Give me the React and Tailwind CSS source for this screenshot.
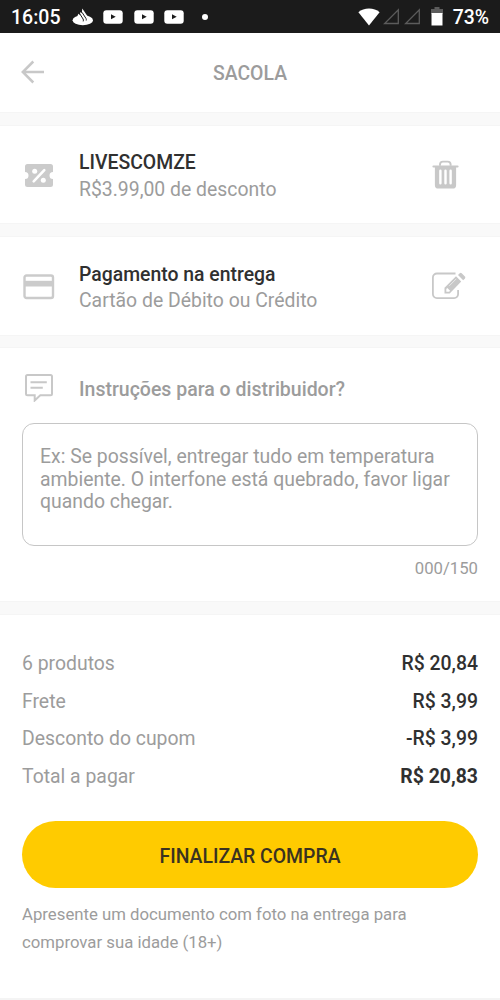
const TOTALS = [
  { label: '6 produtos', value: 'R$ 20,84', weight: 'font-medium' },
  { label: 'Frete', value: 'R$ 3,99', weight: 'font-medium' },
  { label: 'Desconto do cupom', value: '-R$ 3,99', weight: 'font-medium' },
  { label: 'Total a pagar', value: 'R$ 20,83', weight: 'font-bold' },
]

function SantanderIcon() {
  return (
    <svg width="22" height="18" viewBox="0 0 22 18" className="ml-[11px]">
      <ellipse cx="10.800" cy="12.200" rx="10.200" ry="5" fill="#fff" />
      <path d="M5.500 8.500c0-1.200.4-2 1.300-2.800L8 7.200l.3-3.200 1.500 1.300L10.300.5l4.900 7.200c.6.9.7 2 .4 3.300l-2 2.500H10z" fill="#fff" />
      <path d="M7.900 6l3.200 5c.4.7.4 1.500.1 2.400M10 4.300l4 6.200c.3.600.4 1.200.2 2" stroke="#1b1b1b" strokeWidth="1" fill="none" />
    </svg>
  )
}

function YoutubeIcon() {
  return (
    <svg width="20" height="14" viewBox="0 0 20 14">
      <rect x="0.300" y="0.200" width="19.400" height="13.600" rx="3" fill="#fff" />
      <path d="M8 4.300v4.900L12.700 6.750z" fill="#1b1b1b" />
    </svg>
  )
}

function SignalIcon() {
  return (
    <svg width="17" height="17" viewBox="0 0 17 17">
      <path d="M15.300 1.800V15.500H1.600z" fill="none" stroke="#5c5c5c" strokeWidth="1.300" />
    </svg>
  )
}

function StatusBar() {
  return (
    <div className="h-[33px] bg-[#1b1b1b] flex items-center justify-between pl-[11px] pr-[11px] text-white">
      <div className="flex items-center">
        <span className="w-[50px] whitespace-nowrap text-[19.5px] leading-[22px] font-medium pt-[2px]">16:05</span>
        <SantanderIcon />
        <div className="flex items-center gap-[10.5px] ml-[9px]">
          <YoutubeIcon />
          <YoutubeIcon />
          <YoutubeIcon />
        </div>
        <span className="w-1.5 h-1.5 rounded-full bg-white ml-[18px]" />
      </div>
      <div className="flex items-center">
        <svg width="22" height="18" viewBox="0 0 22 18">
          <path d="M.4 4.300C3.200 1.900 6.900.6 11 .6s7.800 1.300 10.600 3.700L11 17.400z" fill="#fff" />
        </svg>
        <div className="flex gap-1 ml-[3px]">
          <SignalIcon />
          <SignalIcon />
        </div>
        <svg width="12" height="19" viewBox="0 0 12 19" className="ml-2.5">
          <path d="M3.500 0h5v2H12v5H0V2h3.500z" fill="#5c5c5c" />
          <path d="M.5 6h11v12.500H.5z" fill="#fff" />
        </svg>
        <span className="ml-2.5 text-[19.4px] leading-[22px] font-medium pt-[2px]">73%</span>
      </div>
    </div>
  )
}

function TicketIcon() {
  return (
    <svg width="28" height="23" viewBox="0 0 28 23" className="mt-[1px]">
      <path
        d="M2.500 0h23A2.500 2.500 0 0 1 28 2.500V8a3.500 3.500 0 0 0 0 7v5.500a2.500 2.500 0 0 1-2.500 2.500h-23A2.500 2.500 0 0 1 0 20.500V15a3.500 3.500 0 0 0 0-7V2.500A2.500 2.500 0 0 1 2.500 0z"
        fill="#cbcbcb"
      />
      <path d="M8.700 17.300L19.300 6.200" stroke="#fff" strokeWidth="2.600" strokeLinecap="round" />
      <circle cx="9.700" cy="7.300" r="2.500" fill="#fff" />
      <circle cx="18.300" cy="16.200" r="2.500" fill="#fff" />
    </svg>
  )
}

function TrashIcon() {
  return (
    <svg width="27" height="29" viewBox="0 0 28 30" preserveAspectRatio="none" fill="none" stroke="#c8c8c8">
      <path d="M8.300 6V4.700a3 3 0 0 1 3-3h5a3 3 0 0 1 3 3V6" strokeWidth="2" />
      <path d="M1.500 6.700h25" strokeWidth="2.200" strokeLinecap="round" />
      <path d="M3 7h22v19a3.500 3.500 0 0 1-3.500 3.500h-15A3.500 3.500 0 0 1 3 26z" fill="#c8c8c8" stroke="none" />
      <path d="M8.700 11v13M14 11v13M19.300 11v13" stroke="#fff" strokeWidth="2.500" strokeLinecap="round" />
    </svg>
  )
}

function EditIcon() {
  return (
    <svg width="34" height="28" viewBox="0 0 34 28" fill="none" stroke="#c8c8c8" strokeWidth="1.800">
      <path d="M23.500 1.500H4.900a4 4 0 0 0-4 4v16.600a4 4 0 0 0 4 4h17.200a4 4 0 0 0 4-4V18" />
      <path d="M12.500 21.500v-5.800L24 4.200l5.200 5.200L17.700 21.500z" fill="#c8c8c8" stroke="none" />
      <path d="M14.300 19.700v-2.700l1-1 2.800 2.800-1 .9z" fill="#fff" stroke="none" />
      <path d="M17.300 13.800l7-7" stroke="#e9e9e9" strokeWidth="1" />
      <path d="M26 3l1.700-1.700a1.500 1.500 0 0 1 2 0l3.200 3.200a1.500 1.500 0 0 1 0 2l-1.700 1.700z" fill="#c8c8c8" stroke="none" />
    </svg>
  )
}

function CardIcon() {
  return (
    <svg width="32" height="26" viewBox="0 0 32 26" className="mt-[1px]">
      <rect x="1.500" y="1.500" width="28.500" height="22.500" rx="2" fill="none" stroke="#cbcbcb" strokeWidth="2.400" />
      <path d="M1.500 6.800h28.500v5.700H1.500z" fill="#cbcbcb" />
    </svg>
  )
}

function MessageIcon() {
  return (
    <svg width="28" height="28" viewBox="0 0 28 28" fill="none" stroke="#c8c8c8" strokeWidth="2">
      <path d="M2.500 1h23A1.500 1.500 0 0 1 27 2.500v17.300a1.500 1.500 0 0 1-1.500 1.500H15.300L9.700 26.500v-5.200H2.500A1.500 1.500 0 0 1 1 19.800V2.500A1.500 1.500 0 0 1 2.500 1z" />
      <path d="M5.500 8.300h16.300M5.500 13.700h12.300" />
    </svg>
  )
}

function Divider({ className = 'h-[14px]' }) {
  return <div className={`${className} bg-[#f9f9f9] border-y border-[#f5f5f5]`} />
}

function InfoRow({ icon, title, subtitle, action, className }) {
  return (
    <section className={`flex items-center pr-[34px] ${className}`}>
      <div className="w-[79px] flex justify-center pr-[1px]">{icon}</div>
      <div className="flex-1 pt-[4px] text-[19.4px] leading-[26.5px]">
        <h2 className="font-medium text-[#303030]">{title}</h2>
        <p className="text-[#9c9c9c]">{subtitle}</p>
      </div>
      <button className="w-[34px] cursor-pointer">{action}</button>
    </section>
  )
}

export default function App() {
  return (
    <div className="w-[500px] h-[1000px] overflow-hidden bg-white font-['Roboto',sans-serif] flex flex-col">
      <StatusBar />

      <header className="h-[79px] grid grid-cols-[1fr_auto_1fr] items-center px-[21px] pt-[1px]">
        <button className="cursor-pointer" aria-label="Voltar">
          <svg width="24" height="24" viewBox="0 0 24 24" fill="none" stroke="#c8c8c8" strokeWidth="2.500" className="mb-[2px]">
            <path d="M12.300 1.500L1.800 12l10.500 10.500M1.800 12H23" />
          </svg>
        </button>
        <h1 className="pt-[2px] text-[19.4px] font-medium text-[#9c9c9c]">SACOLA</h1>
      </header>

      <Divider />
      <InfoRow
        className="h-[97px]"
        icon={<TicketIcon />}
        title="LIVESCOMZE"
        subtitle="R$3.99,00 de desconto"
        action={<TrashIcon />}
      />
      <Divider />
      <InfoRow
        className="h-[98px]"
        icon={<CardIcon />}
        title="Pagamento na entrega"
        subtitle="Cartão de Débito ou Crédito"
        action={<EditIcon />}
      />
      <Divider className="h-[13px]" />

      <section className="h-[253px] px-[22px] pt-[26px]">
        <div className="flex items-center h-7">
          <div className="w-[57px] pl-[3px]">
            <MessageIcon />
          </div>
          <label htmlFor="notes" className="pt-[3px] text-[19.5px] font-medium text-[#9c9c9c]">
            Instruções para o distribuidor?
          </label>
        </div>
        <textarea
          id="notes"
          placeholder={'Ex: Se possível, entregar tudo em temperatura ambiente. O interfone está quebrado, favor ligar quando chegar.'}
          className="block w-full h-[123px] mt-[21px] pl-[17px] pr-2 pt-[22px] rounded-xl border border-[#c6c6c6] resize-none outline-none text-[19.4px] leading-[22.7px] placeholder:text-[#9c9c9c]"
        />
        <p className="mt-3 text-right text-[16.7px] leading-[22px] text-[#9c9c9c]">000/150</p>
      </section>

      <Divider />

      <section className="flex-1 px-[22px] pt-[30px]">
        <dl>
          {TOTALS.map((row) => (
            <div key={row.label} className="flex justify-between h-[37.5px] items-center text-[19.4px]">
              <dt className="text-[#9c9c9c]">{row.label}</dt>
              <dd className={`text-[#303030] ${row.weight}`}>{row.value}</dd>
            </div>
          ))}
        </dl>
        <button className="mt-[26px] w-full h-[67px] pt-[4px] rounded-full bg-[#ffcb00] text-[19.4px] font-medium text-[#3a3220] cursor-pointer">
          FINALIZAR COMPRA
        </button>
        <p className="mt-[13px] text-[16.75px] leading-[27.5px] text-[#9c9c9c]">
          Apresente um documento com foto na entrega para
          <br />
          comprovar sua idade (18+)
        </p>
      </section>
      <div className="h-[2px] bg-[#f4f4f4]" />
    </div>
  )
}
